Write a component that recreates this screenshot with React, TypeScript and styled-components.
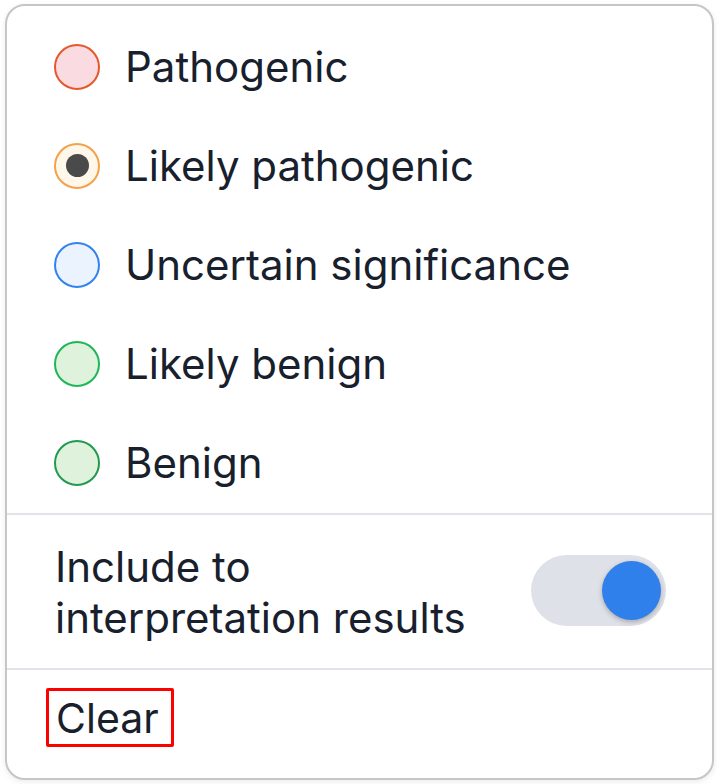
import React, { useState } from "react";
import styled, { createGlobalStyle } from "styled-components";

const GlobalStyle = createGlobalStyle`
  html, body {
    margin: 0;
    padding: 0;
    background: #ffffff;
  }
  body {
    font-family: Inter, "Noto Sans", "Liberation Sans", sans-serif;
    color: #17202c;
  }
`;

interface Option {
  label: string;
  border: string;
  fill: string;
}

const options: Option[] = [
  { label: "Pathogenic", border: "#e8572a", fill: "#f9dbe1" },
  { label: "Likely pathogenic", border: "#f4a14c", fill: "#fff7ea" },
  { label: "Uncertain significance", border: "#3383ee", fill: "#ebf3fe" },
  { label: "Likely benign", border: "#1fb659", fill: "#dff2dc" },
  { label: "Benign", border: "#22994f", fill: "#dff2dc" },
];

const Page = styled.div`
  width: 717px;
  height: 784px;
  padding: 4px 0 0 5px;
  box-sizing: border-box;
`;

const Card = styled.div`
  width: 709px;
  height: 776px;
  box-sizing: border-box;
  background: #fff;
  border: 2px solid #c6c6c6;
  border-radius: 20px;
  box-shadow: 0 2px 6px rgba(0, 0, 0, 0.08);
  display: flex;
  flex-direction: column;
  overflow: hidden;
`;

const OptionList = styled.div`
  display: flex;
  flex-direction: column;
  padding: 11px 0 1px 0;
`;

const Row = styled.label`
  height: 99px;
  display: flex;
  align-items: center;
  gap: 25px;
  padding-left: 47px;
  font-size: 42px;
  cursor: pointer;
`;

const Radio = styled.span<{ $border: string; $fill: string }>`
  width: 46px;
  height: 46px;
  box-sizing: border-box;
  border-radius: 50%;
  border: 2.5px solid ${(p) => p.$border};
  background: ${(p) => p.$fill};
  display: flex;
  align-items: center;
  justify-content: center;
  flex-shrink: 0;
`;

const Dot = styled.span`
  width: 23px;
  height: 23px;
  border-radius: 50%;
  background: #4a4a4a;
`;

const Divider = styled.div`
  height: 2px;
  background: #e1e3e8;
`;

const ToggleSection = styled.div`
  height: 153px;
  display: flex;
  align-items: center;
  justify-content: space-between;
  padding: 0 46px 0 48px;
  box-sizing: border-box;
`;

const ToggleLabel = styled.div`
  font-size: 42px;
  line-height: 51px;
`;

const Track = styled.button<{ $on: boolean }>`
  width: 135px;
  height: 71px;
  border: none;
  border-radius: 36px;
  background: #dfe1e8;
  padding: 0 5px;
  display: flex;
  align-items: center;
  justify-content: ${(p) => (p.$on ? "flex-end" : "flex-start")};
  cursor: pointer;
  margin-top: -3px;
`;

const Knob = styled.span`
  width: 59px;
  height: 59px;
  border-radius: 50%;
  background: #2f80ea;
  box-shadow: 0 2px 5px rgba(0, 0, 0, 0.25);
`;

const Footer = styled.div`
  flex: 1;
  display: flex;
  align-items: center;
  padding: 0 0 14px 39px;
`;

const ClearButton = styled.button`
  font-family: inherit;
  font-size: 41px;
  color: #17202c;
  background: none;
  border: 3px solid #ff0000;
  border-radius: 2px;
  padding: 5px 12px 4px 7px;
  line-height: 44px;
  cursor: pointer;
`;

const App = () => {
  const [selected, setSelected] = useState<number | null>(1);
  const [include, setInclude] = useState(true);

  return (
    <Page>
      <GlobalStyle />
      <Card>
        <OptionList>
          {options.map((opt, i) => (
            <Row key={opt.label} onClick={() => setSelected(i)}>
              <Radio $border={opt.border} $fill={opt.fill}>
                {selected === i && <Dot />}
              </Radio>
              {opt.label}
            </Row>
          ))}
        </OptionList>
        <Divider />
        <ToggleSection>
          <ToggleLabel>
            Include to
            <br />
            interpretation results
          </ToggleLabel>
          <Track $on={include} onClick={() => setInclude(!include)}>
            <Knob />
          </Track>
        </ToggleSection>
        <Divider />
        <Footer>
          <ClearButton onClick={() => setSelected(null)}>Clear</ClearButton>
        </Footer>
      </Card>
    </Page>
  );
};

export default App;
